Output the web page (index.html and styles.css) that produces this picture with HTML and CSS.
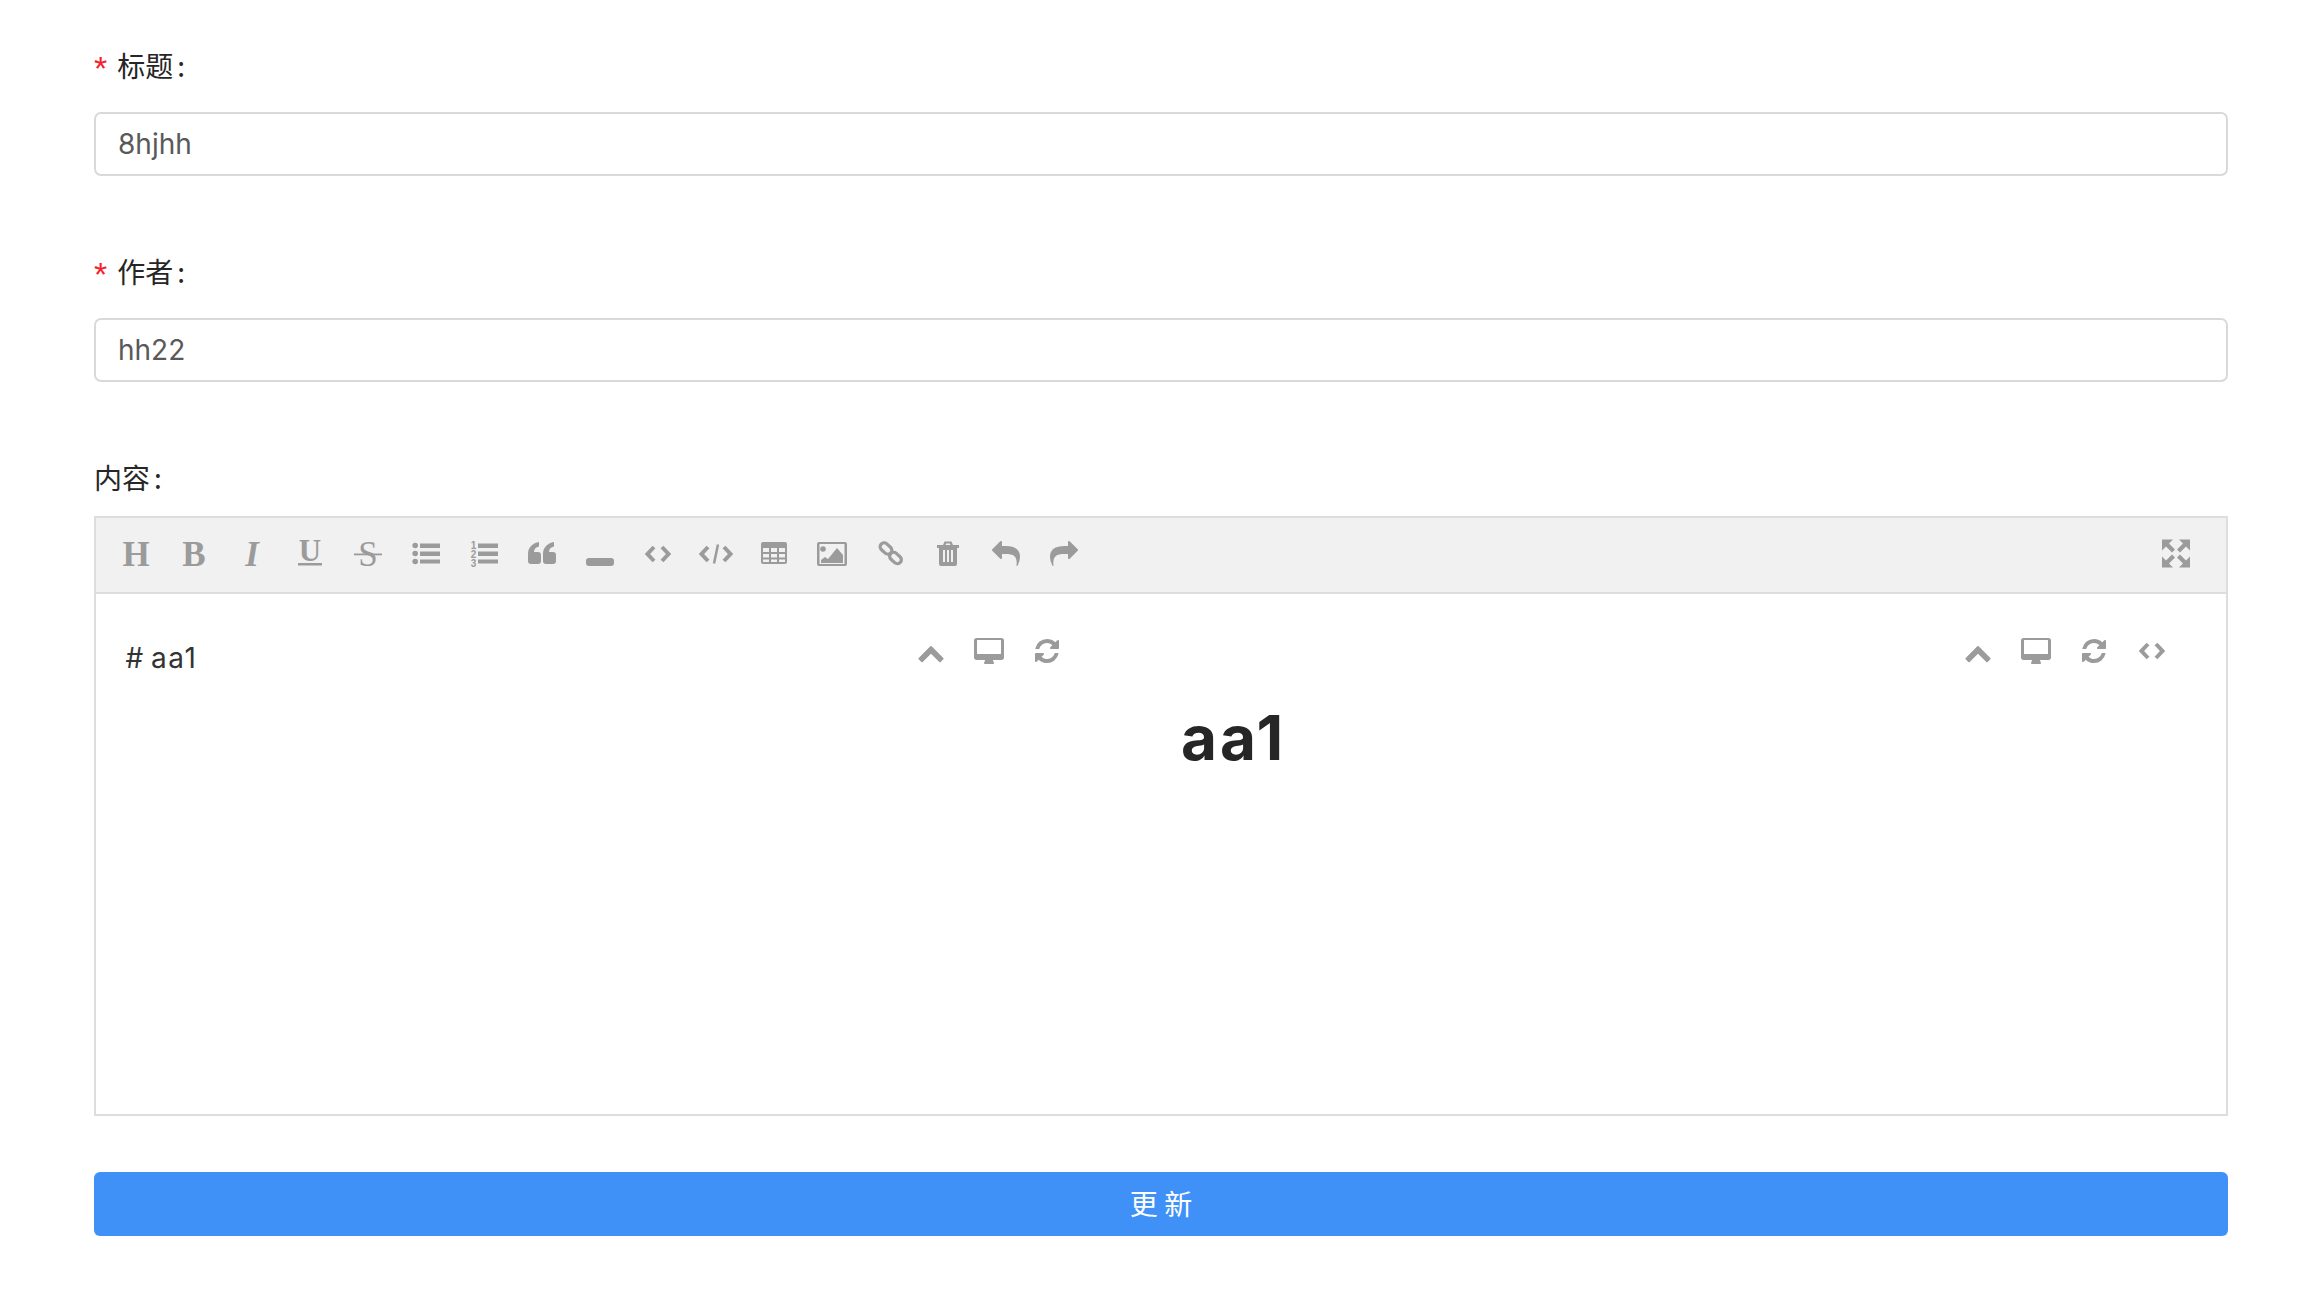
FILE: index.html
```html
<!doctype html>
<html lang="zh">
  <head>
    <meta charset="utf-8" />
    <meta name="viewport" content="width=device-width, initial-scale=1" />
    <title>编辑</title>
    <link rel="stylesheet" href="styles.css">
  </head>
  <body>
    <form class="form">
      <div class="form-item">
        <label class="form-label"><span class="required">*</span>标题<span class="colon">:</span></label>
        <input class="form-input" type="text" value="8hjhh" />
      </div>

      <div class="form-item">
        <label class="form-label"><span class="required">*</span>作者<span class="colon">:</span></label>
        <input class="form-input" type="text" value="hh22" />
      </div>

      <div class="form-item form-item-editor">
        <label class="form-label">内容<span class="colon">:</span></label>
        <div class="editor">
          <div class="toolbar">
            <button type="button" class="tool"><svg class="icon" viewBox="0 0 28 28"><text x="14" y="25" class="glyph">H</text></svg></button>
            <button type="button" class="tool"><svg class="icon" viewBox="0 0 28 28"><text x="14" y="25" class="glyph">B</text></svg></button>
            <button type="button" class="tool"><svg class="icon" viewBox="0 0 28 28"><text x="14" y="25" class="glyph glyph-italic">I</text></svg></button>
            <button type="button" class="tool"><svg class="icon" viewBox="0 0 28 28"><text x="14" y="20" class="glyph glyph-small">U</text><rect x="2" y="22" width="24" height="2.5" /></svg></button>
            <button type="button" class="tool"><svg class="icon" viewBox="0 0 28 28"><text x="14" y="25" class="glyph glyph-thin">S</text><rect x="0" y="12.500" width="28" height="1.800" /></svg></button>
            <button type="button" class="tool">
              <svg class="icon" viewBox="0 0 28 28">
                <circle cx="3.200" cy="4.500" r="2.800" /><circle cx="3.200" cy="12.500" r="2.800" /><circle cx="3.200" cy="20.500" r="2.800" />
                <rect x="8" y="2.500" width="20" height="4.500" /><rect x="8" y="10.500" width="20" height="4.500" /><rect x="8" y="18.500" width="20" height="4" />
              </svg>
            </button>
            <button type="button" class="tool">
              <svg class="icon" viewBox="0 0 28 28">
                <text x="3.500" y="8" class="digit">1</text><text x="3.500" y="17" class="digit">2</text><text x="3.500" y="26" class="digit">3</text>
                <rect x="8" y="2.500" width="20" height="4.500" /><rect x="8" y="10.500" width="20" height="4.500" /><rect x="8" y="18.500" width="20" height="4" />
              </svg>
            </button>
            <button type="button" class="tool">
              <svg class="icon" viewBox="0 0 28 28">
                <path d="M11 1C5 2 0 6 0 13v7a3 3 0 0 0 3 3h7a3 3 0 0 0 3-3v-6a3 3 0 0 0-3-3H6c0-3 2-5 5-5.500z" />
                <path d="M26 1c-6 1-11 5-11 12v7a3 3 0 0 0 3 3h7a3 3 0 0 0 3-3v-6a3 3 0 0 0-3-3h-4c0-3 2-5 5-5.500z" />
              </svg>
            </button>
            <button type="button" class="tool"><svg class="icon" viewBox="0 0 28 28"><rect x="0" y="17" width="28" height="8" rx="3" /></svg></button>
            <button type="button" class="tool">
              <svg class="icon" viewBox="0 0 28 28"><path class="line" d="M10 6l-6.500 7L10 20M18 6l6.500 7L18 20" /></svg>
            </button>
            <button type="button" class="tool">
              <svg class="icon icon-wide" viewBox="0 0 34 28"><path class="line" d="M9 6l-6.500 7L9 20M25 6l6.500 7L25 20" /><path class="line line-thin" d="M19 3.500l-4 19" /></svg>
            </button>
            <button type="button" class="tool">
              <svg class="icon" viewBox="0 0 28 28">
                <path fill-rule="evenodd" d="M3 1h22a2 2 0 0 1 2 2v18a2 2 0 0 1-2 2H3a2 2 0 0 1-2-2V3a2 2 0 0 1 2-2zM3 7v4h6V7zM11 7v4h6V7zM19 7v4h6V7zM3 13v3.500h6V13zM11 13v3.500h6V13zM19 13v3.500h6V13zM3 18.500V21h6v-2.500zM11 18.500V21h6v-2.500zM19 18.500V21h6v-2.500z" />
              </svg>
            </button>
            <button type="button" class="tool">
              <svg class="icon icon-image" viewBox="0 0 32 28">
                <path fill-rule="evenodd" d="M3 1h26a2 2 0 0 1 2 2v20a2 2 0 0 1-2 2H3a2 2 0 0 1-2-2V3a2 2 0 0 1 2-2zM3.500 3v20h25V3z" />
                <circle cx="7" cy="8" r="2.800" /><path d="M5 22v-3l4-3 3 2 9-11 6 7v8z" />
              </svg>
            </button>
            <button type="button" class="tool">
              <svg class="icon" viewBox="0 0 28 28">
                <g class="chain">
                  <rect x="3.500" y="3.500" width="13" height="8" rx="4" transform="rotate(42 10 7.500)" />
                  <rect x="13" y="13" width="13" height="8" rx="4" transform="rotate(42 19.500 17)" />
                </g>
              </svg>
            </button>
            <button type="button" class="tool">
              <svg class="icon" viewBox="0 0 28 28">
                <path fill-rule="evenodd" d="M9 4l1.500-3.500h7L19 4h6v3h-2v16a2 2 0 0 1-2 2H7a2 2 0 0 1-2-2V7H3V4zM11.500 4h5l-.7-1.500h-3.600zM9 9v12h2V9zM13 9v12h2V9zM17 9v12h2V9z" />
              </svg>
            </button>
            <button type="button" class="tool">
              <svg class="icon" viewBox="0 64 1792 1792"><path d="M1792 1120q0 166-127 451-3 7-10.500 24t-13.500 30-13 22q-12 17-28 17-15 0-23.500-10t-8.500-25q0-9 2.500-26.500t2.500-23.500q5-68 5-123 0-101-17.500-181t-48.500-138.500-80-101-105.500-69.500-133-42.500-154-21.500-175.500-6h-224v256q0 26-19 45t-45 19-45-19l-512-512q-19-19-19-45t19-45l512-512q19-19 45-19t45 19 19 45v256h224q713 0 875 403 53 134 53 333z" /></svg>
            </button>
            <button type="button" class="tool">
              <svg class="icon" viewBox="0 64 1792 1792"><path d="M1792 640q0 26-19 45l-512 512q-19 19-45 19t-45-19-19-45v-256h-224q-98 0-175.500 6t-154 21.500-133 42.500-105.500 69.500-80 101-48.500 138.500-17.500 181q0 55 5 123 0 6 2.500 23.500t2.500 26.500q0 15-8.500 25t-23.500 10q-16 0-28-17-7-9-13-22t-13.500-30-10.500-24q-127-285-127-451 0-199 53-333 162-403 875-403h224v-256q0-26 19-45t45-19 45 19l512 512q19 19 19 45z" /></svg>
            </button>
            <button type="button" class="tool tool-end">
              <svg class="icon" viewBox="0 1.500 28 28">
                <path d="M0 0h11L7 4l6 6-3 3-6-6-4 4zM28 0H17l4 4-6 6 3 3 6-6 4 4zM0 28h11l-4-4 6-6-3-3-6 6-4-4zM28 28H17l4-4-6-6 3-3 6 6 4-4z" />
              </svg>
            </button>
          </div>

          <div class="editor-body">
            <div class="pane pane-edit">
              <div class="pane-tools">
                <button type="button" class="tool"><svg class="icon" viewBox="0 -100 1792 1792"><path d="M1683 1331l-166 165q-19 19-45 19t-45-19l-531-531-531 531q-19 19-45 19t-45-19l-166-165q-19-19-19-45.500t19-45.500l742-741q19-19 45-19t45 19l742 741q19 19 19 45.500t-19 45.500z" /></svg></button>
                <button type="button" class="tool"><svg class="icon icon-desktop" viewBox="0 0 1920 1664"><path d="M1728 992v-832q0-13-9.500-22.500t-22.500-9.500h-1472q-13 0-22.500 9.500t-9.500 22.500v832q0 13 9.500 22.500t22.500 9.500h1472q13 0 22.500-9.500t9.500-22.500zm192-832v1088q0 66-47 113t-113 47h-544q0 37 16 77.500t32 71 16 43.500q0 26-19 45t-45 19h-512q-26 0-45-19t-19-45q0-14 16-44t32-70 16-78h-544q-66 0-113-47t-47-113v-1088q0-66 47-113t113-47h1600q66 0 113 47t47 113z" /></svg></button>
                <button type="button" class="tool"><svg class="icon" viewBox="0 0 1792 1792"><path d="M1639 1056q0 5-1 7-64 268-268 434.500t-478 166.500q-146 0-282.500-55t-243.500-157l-129 129q-19 19-45 19t-45-19-19-45v-448q0-26 19-45t45-19h448q26 0 45 19t19 45-19 45l-137 137q71 66 161 102t187 36q134 0 250-65t186-179q11-17 53-117 8-23 30-23h192q13 0 22.500 9.500t9.500 22.500zm25-800v448q0 26-19 45t-45 19h-448q-26 0-45-19t-19-45 19-45l138-138q-148-137-349-137-134 0-250 65t-186 179q-11 17-53 117-8 23-30 23h-199q-13 0-22.500-9.500t-9.500-22.500v-7q65-268 270-434.500t480-166.500q146 0 284 55.500t245 156.500l130-129q19-19 45-19t45 19 19 45z" /></svg></button>
              </div>
              <div class="source"># aa1</div>
            </div>

            <div class="pane pane-preview">
              <div class="pane-tools">
                <button type="button" class="tool"><svg class="icon" viewBox="0 -100 1792 1792"><path d="M1683 1331l-166 165q-19 19-45 19t-45-19l-531-531-531 531q-19 19-45 19t-45-19l-166-165q-19-19-19-45.500t19-45.500l742-741q19-19 45-19t45 19l742 741q19 19 19 45.500t-19 45.500z" /></svg></button>
                <button type="button" class="tool"><svg class="icon icon-desktop" viewBox="0 0 1920 1664"><path d="M1728 992v-832q0-13-9.500-22.500t-22.500-9.500h-1472q-13 0-22.500 9.500t-9.500 22.500v832q0 13 9.500 22.500t22.500 9.500h1472q13 0 22.500-9.500t9.500-22.500zm192-832v1088q0 66-47 113t-113 47h-544q0 37 16 77.500t32 71 16 43.500q0 26-19 45t-45 19h-512q-26 0-45-19t-19-45q0-14 16-44t32-70 16-78h-544q-66 0-113-47t-47-113v-1088q0-66 47-113t113-47h1600q66 0 113 47t47 113z" /></svg></button>
                <button type="button" class="tool"><svg class="icon" viewBox="0 0 1792 1792"><path d="M1639 1056q0 5-1 7-64 268-268 434.500t-478 166.500q-146 0-282.500-55t-243.500-157l-129 129q-19 19-45 19t-45-19-19-45v-448q0-26 19-45t45-19h448q26 0 45 19t19 45-19 45l-137 137q71 66 161 102t187 36q134 0 250-65t186-179q11-17 53-117 8-23 30-23h192q13 0 22.500 9.500t9.500 22.500zm25-800v448q0 26-19 45t-45 19h-448q-26 0-45-19t-19-45 19-45l138-138q-148-137-349-137-134 0-250 65t-186 179q-11 17-53 117-8 23-30 23h-199q-13 0-22.500-9.500t-9.500-22.500v-7q65-268 270-434.500t480-166.500q146 0 284 55.500t245 156.500l130-129q19-19 45-19t45 19 19 45z" /></svg></button>
                <button type="button" class="tool"><svg class="icon" viewBox="0 -1 28 28"><path class="line" d="M10 6l-6.500 7L10 20M18 6l6.500 7L18 20" /></svg></button>
              </div>
              <h1 class="preview-title">aa1</h1>
            </div>
          </div>
        </div>
      </div>

      <button type="submit" class="submit">更 新</button>
    </form>
  </body>
</html>
```

FILE: styles.css
```css
:root {
  --icon-color: #9b9b9b;
  --border-color: #dddddd;
  --input-border: #d9d9d9;
  --label-color: #262626;
  --primary-color: #4091f7;
}

body {
  margin: 0;
  padding: 46px 74px 0 94px;
  background-color: #ffffff;
  color: var(--label-color);
  font-family: Inter, 'Noto Sans CJK SC', sans-serif;
}

.form-item {
  margin-bottom: 76px;
}

.form-item-editor {
  margin-bottom: 56px;
}

.form-label {
  display: block;
  height: 40px;
  margin-bottom: 26px;
  font-family: 'Noto Sans CJK SC', sans-serif;
  font-size: 28px;
  line-height: 38px;
}

.form-item-editor .form-label {
  margin-bottom: 18px;
}

.required {
  margin-right: 10px;
  color: #f5222d;
  font-family: 'Liberation Sans', sans-serif;
  font-size: 34px;
  line-height: 0;
  vertical-align: -3px;
}

.colon {
  margin-left: 4px;
}

.form-input {
  display: block;
  box-sizing: border-box;
  width: 100%;
  height: 64px;
  padding: 0 22px;
  border: 2px solid var(--input-border);
  border-radius: 7px;
  outline: none;
  color: #595959;
  font-family: Inter, sans-serif;
  font-size: 28px;
}

.editor {
  display: flex;
  flex-direction: column;
  box-sizing: border-box;
  height: 600px;
  border: 2px solid var(--border-color);
}

.toolbar {
  display: flex;
  align-items: center;
  height: 74px;
  padding: 0 21px 0 10.500px;
  border-bottom: 2px solid var(--border-color);
  background-color: #f1f1f1;
}

.tool {
  display: flex;
  align-items: center;
  justify-content: center;
  width: 58px;
  height: 28px;
  padding: 0;
  border: none;
  background: none;
  color: var(--icon-color);
  cursor: pointer;
}

.tool-end {
  margin-left: auto;
}

.icon {
  width: 28px;
  height: 28px;
  fill: currentColor;
  overflow: visible;
}

.icon-wide {
  width: 34px;
}

.icon-image {
  width: 32px;
}

.icon-desktop {
  width: 30px;
  height: 26px;
}

.glyph {
  font-family: 'Liberation Serif', serif;
  font-size: 35px;
  font-weight: 700;
  text-anchor: middle;
}

.glyph-italic {
  font-style: italic;
}

.glyph-small {
  font-size: 31px;
}

.glyph-thin {
  font-weight: 400;
}

.digit {
  font-family: 'Liberation Sans', sans-serif;
  font-size: 10px;
  font-weight: 700;
  text-anchor: middle;
}

.line {
  fill: none;
  stroke: currentColor;
  stroke-width: 4;
}

.line-thin {
  stroke-width: 2.500;
}

.chain rect {
  fill: none;
  stroke: currentColor;
  stroke-width: 3.200;
}

.editor-body {
  display: flex;
  flex: 1;
}

.pane {
  position: relative;
  box-sizing: border-box;
}

.pane-edit {
  flex: 0 0 1024.500px;
  padding: 44px 29.500px;
}

.pane-preview {
  flex: 1;
  padding: 104px 60.500px 0;
}

.pane-tools {
  position: absolute;
  top: 43px;
  right: 45px;
  display: flex;
}

.source {
  color: #333333;
  font-size: 28px;
  letter-spacing: 1.500px;
  line-height: 40px;
  word-spacing: -3px;
}

.preview-title {
  margin: 0;
  color: #262626;
  font-size: 62px;
  font-weight: 700;
  letter-spacing: 3px;
  line-height: 80px;
}

.submit {
  display: block;
  width: 100%;
  height: 64px;
  padding: 0 0 2px;
  border: none;
  border-radius: 6px;
  background-color: var(--primary-color);
  box-shadow: 0 4px 0 #f5f5f5;
  color: #ffffff;
  font-family: 'Noto Sans CJK SC', sans-serif;
  font-size: 28px;
  cursor: pointer;
}
```
